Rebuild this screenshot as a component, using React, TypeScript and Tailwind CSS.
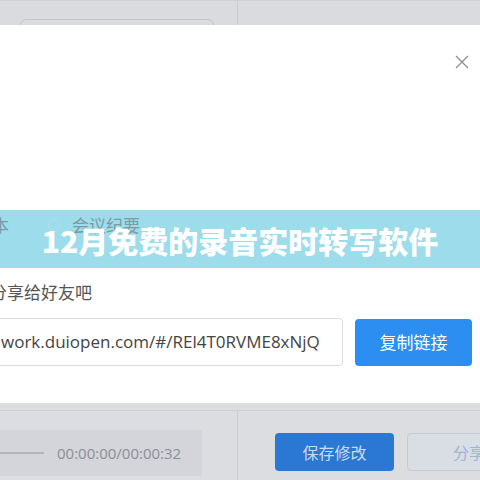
import React from "react";

const cjk = { fontFamily: '"Noto Sans CJK SC", "Noto Sans", sans-serif' };

export default function App() {
  return (
    <div className="w-[480px] h-[480px] overflow-hidden relative bg-white" style={cjk}>
      {/* top strip of dimmed page */}
      <div className="h-[25px] bg-[#dadbdf] border-t border-[#cfd0d4] flex relative">
        <div className="w-[238px] shrink-0 h-full border-r border-[#c9cace] flex">
          <div className="ml-[20px] mt-[18px] w-[194px] h-[20px] border border-[#c3c4c8] rounded-[6px]" />
        </div>
      </div>

      {/* modal body */}
      <div className="h-[378px] bg-white flex flex-col relative">
        <div className="flex justify-end pt-[30px] pr-[10px]">
          <svg width="14" height="14" viewBox="0 0 14 14" className="mr-[1px]">
            <path d="M1 1 L13 13 M13 1 L1 13" stroke="#8f8f8f" strokeWidth="1.3" />
          </svg>
        </div>

        <div className="mt-[141px] h-[58px] bg-[#9ddcea] relative flex items-center justify-center">
          <div className="absolute left-0 top-[2px] flex items-center text-[17px] text-[#7b9aa3]">
            <span className="ml-[-8px]">本</span>
            <span className="ml-[39px] w-[12px] h-[12px] rounded-full border border-[#b5dbe4]" />
            <span className="ml-[12px]">会议纪要</span>
          </div>
          <span className="relative text-white font-black text-[30px] mt-[2px] whitespace-nowrap">
            12月免费的录音实时转写软件
          </span>
        </div>

        <div className="mt-[13px] ml-[-10px] text-[17px] text-[#555] leading-[22px]">分享给好友吧</div>

        <div className="mt-[15px] flex items-center">
          <div className="ml-[-20px] shrink-0 w-[363px] h-[48px] border border-[#dcdcdc] rounded-[4px] flex items-center pl-[20px] text-[17px] text-[#444]" style={{ fontFamily: '"Open Sans", "Noto Sans", sans-serif' }}>
            work.duiopen.com/#/REl4T0RVME8xNjQ
          </div>
          <div className="ml-[12px] shrink-0 w-[117px] h-[47px] bg-[#2b8ef0] rounded-[4px] flex items-center justify-center text-white text-[17px]">
            复制链接
          </div>
        </div>
      </div>

      {/* bottom strip */}
      <div className="h-[77px] bg-[#dcdde1] flex flex-col">
        <div className="h-[8px] border-b border-[#cfd0d4]" />
        <div className="flex flex-1">
          <div className="w-[238px] shrink-0 border-r border-[#cdced2] pt-[19px]">
            <div className="w-[202px] h-[46px] bg-[#d3d5da] flex items-center">
              <div className="w-[44px] h-[2px] bg-[#b3b6bb]" />
              <span className="ml-[13px] text-[15px] text-[#8a8f96]" style={{ fontFamily: '"Open Sans", "Noto Sans", sans-serif' }}>
                00:00:00/00:00:32
              </span>
            </div>
          </div>
          <div className="flex shrink-0 pt-[22px] pl-[37px]">
            <div className="shrink-0 w-[119px] h-[38px] bg-[#2a78d3] rounded-[4px] flex items-center justify-center text-[#c9dcf2] text-[16px]">
              保存修改
            </div>
            <div className="shrink-0 ml-[13px] w-[100px] h-[38px] bg-[#d9dde4] border border-[#c5cad2] rounded-[4px] flex items-center pl-[45px] text-[#9fb5d3] text-[16px] whitespace-nowrap">
              分享
            </div>
          </div>
        </div>
      </div>
    </div>
  );
}
